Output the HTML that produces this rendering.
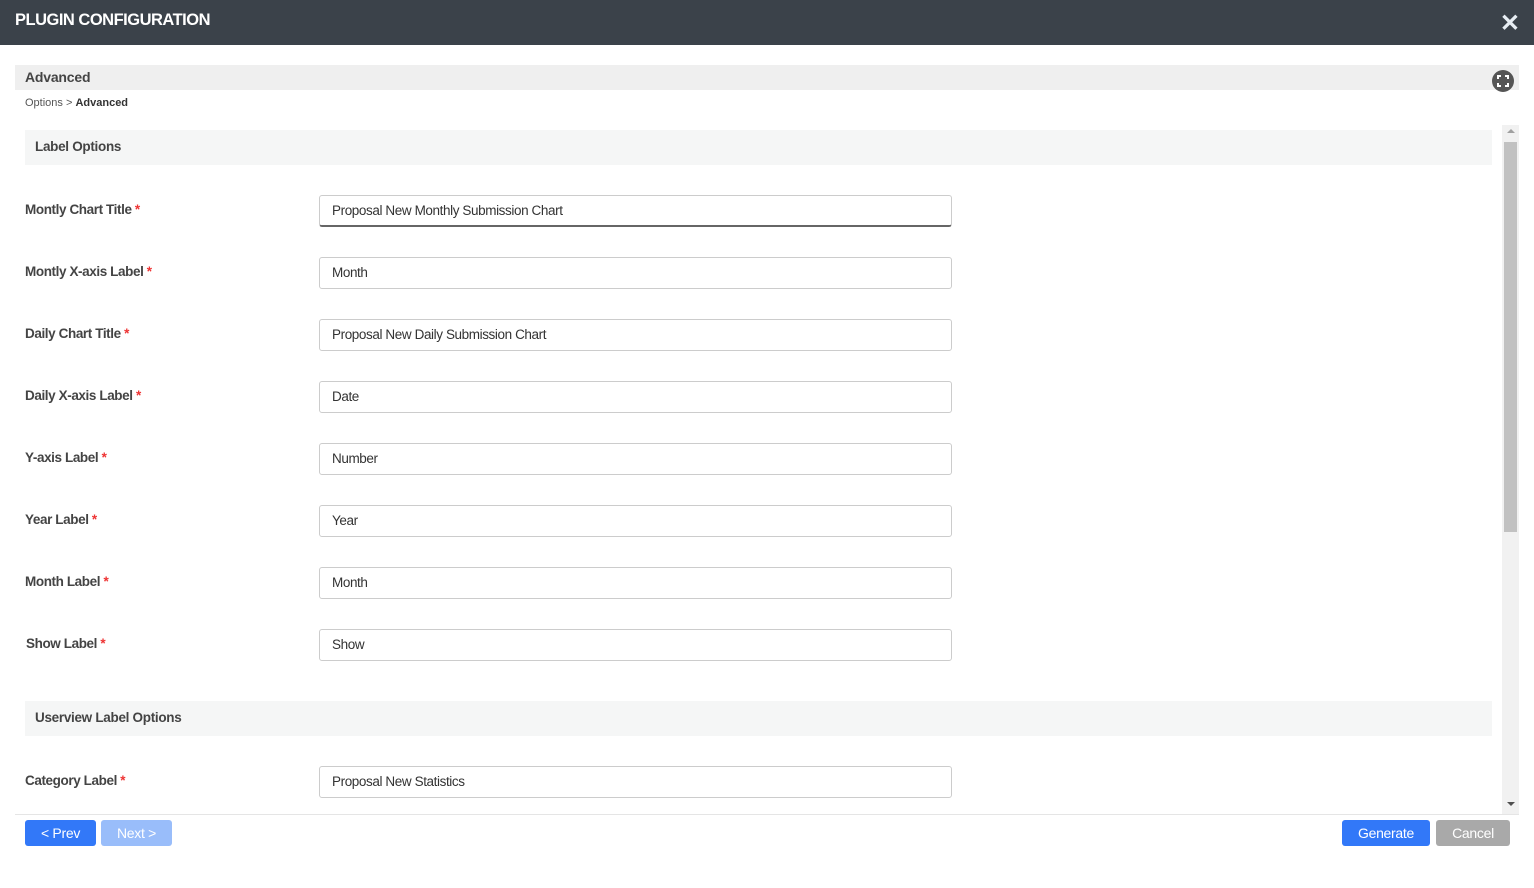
<!DOCTYPE html>
<html><head><style>
*{box-sizing:border-box;margin:0;padding:0}
body{width:1534px;height:888px;background:#fff;font-family:"Liberation Sans",Arial,sans-serif;position:relative;overflow:hidden;color:#333}
.hdr{position:absolute;left:0;top:0;width:1534px;height:45px;background:#3b424a;color:#fff;font-weight:bold;font-size:16.5px;padding:11px 15px;letter-spacing:-0.5px}
.x{position:absolute;right:14px;top:9px;color:#e8eef4;font-size:24px;font-weight:bold}
.adv{position:absolute;left:15px;top:65px;width:1504px;height:25px;background:#efefef;font-size:14px;font-weight:bold;color:#444;padding:4px 10px;letter-spacing:-0.2px}
.bc{position:absolute;left:25px;top:97px;font-size:11px;color:#555}
.bc b{color:#333}
.sec{position:absolute;left:25px;width:1467px;height:35px;background:#f5f6f6;font-size:13.5px;font-weight:bold;color:#444;padding:9px 10px;letter-spacing:-0.3px}
.lbl{position:absolute;left:25px;font-size:13.5px;font-weight:bold;color:#444;letter-spacing:-0.4px}
.lbl span{color:#e33}
.in{position:absolute;left:319px;width:633px;height:32px;border:1px solid #ccc;border-radius:3px;font-size:13.5px;color:#333;padding:7px 12px;letter-spacing:-0.4px}
.sb{position:absolute;left:1502px;top:125px;width:17px;height:689px;background:#f1f1f1}
.th{position:absolute;left:1504px;top:142px;width:13px;height:390px;background:#c1c1c1}
.btn{position:absolute;top:820px;height:26px;border-radius:3px;color:#fff;font-size:14px;text-align:center;line-height:26px;letter-spacing:-0.3px}
</style></head><body>
<div class="hdr">PLUGIN CONFIGURATION</div><div class="x">✕</div>
<div class="adv">Advanced</div>
<svg style="position:absolute;left:1492px;top:70px" width="22" height="22" viewBox="0 0 22 22"><circle cx="11" cy="11" r="11" fill="#555"/><path d="M6 9V6h3M13 6h3v3M16 13v3h-3M9 16H6v-3" stroke="#fff" stroke-width="2" fill="none"/></svg>
<div class="bc">Options &gt; <b>Advanced</b></div>
<div class="sec" style="top:130px">Label Options</div>
<div class="lbl" style="top:202px">Montly Chart Title <span>*</span></div><div class="in" style="top:195px;border-bottom:2px solid #666">Proposal New Monthly Submission Chart</div>
<div class="lbl" style="top:264px">Montly X-axis Label <span>*</span></div><div class="in" style="top:257px">Month</div>
<div class="lbl" style="top:326px">Daily Chart Title <span>*</span></div><div class="in" style="top:319px">Proposal New Daily Submission Chart</div>
<div class="lbl" style="top:388px">Daily X-axis Label <span>*</span></div><div class="in" style="top:381px">Date</div>
<div class="lbl" style="top:450px">Y-axis Label <span>*</span></div><div class="in" style="top:443px">Number</div>
<div class="lbl" style="top:512px">Year Label <span>*</span></div><div class="in" style="top:505px">Year</div>
<div class="lbl" style="top:574px">Month Label <span>*</span></div><div class="in" style="top:567px">Month</div>
<div class="lbl" style="top:636px;left:26px">Show Label <span>*</span></div><div class="in" style="top:629px">Show</div>
<div class="sec" style="top:701px">Userview Label Options</div>
<div class="lbl" style="top:773px">Category Label <span>*</span></div><div class="in" style="top:766px">Proposal New Statistics</div>
<div class="sb"></div><div class="th"></div>
<div style="position:absolute;left:1507px;top:129px;border:4px solid transparent;border-bottom:4px solid #a0a0a0;border-top:0"></div>
<div style="position:absolute;left:1507px;top:802px;border:4px solid transparent;border-top:4px solid #505050;border-bottom:0"></div>
<div style="position:absolute;left:15px;top:814px;width:1504px;height:1px;background:#e5e5e5"></div>
<div class="btn" style="left:25px;width:71px;background:#3278f8">&lt; Prev</div>
<div class="btn" style="left:101px;width:71px;background:#99bdfa">Next &gt;</div>
<div class="btn" style="left:1342px;width:88px;background:#3278f8">Generate</div>
<div class="btn" style="left:1436px;width:74px;background:#a9a9a9">Cancel</div>
</body></html>
